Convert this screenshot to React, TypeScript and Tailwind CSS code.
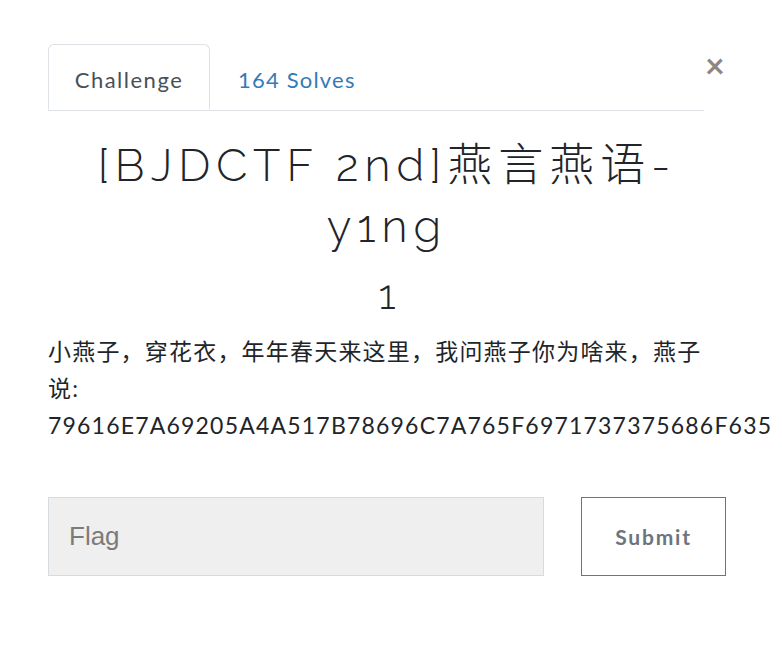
export default function App() {
  return (
    <div className="w-[782px] h-[648px] bg-white relative" style={{ fontFamily: 'Lato, "Noto Sans CJK SC", sans-serif' }}>
      <button className="absolute left-[705px] top-[48px] text-[34px] leading-none text-[#888] font-bold">×</button>
      <div className="pt-[44px] pl-[48px] pr-[56px]">
        <div className="flex w-[656px] border-b border-[#dee2e6]">
          <div className="w-[162px] h-[66px] -mb-px flex items-center justify-center border border-[#dee2e6] border-b-white rounded-t-[6px] text-[22px] tracking-[1.5px] text-[#495057] pt-[4px]">
            Challenge
          </div>
          <div className="pl-[28px] h-[66px] flex items-center text-[22px] tracking-[1.2px] text-[#337ab7] pt-[4px]">
            164 Solves
          </div>
        </div>
        <div className="pt-[24px] text-center text-[#212529] w-[678px]">
          <h2
            className="text-[45px] leading-[61px] font-light px-[20px] tracking-[6px]"
            style={{ fontFamily: 'Raleway, "Noto Sans", "Noto Sans CJK SC", sans-serif' }}
          >
            [BJDCTF 2nd]燕言燕语-y1ng
          </h2>
          <h3 className="text-[42px] leading-[76px] font-light" style={{ fontFamily: 'Raleway, "Noto Sans", sans-serif' }}>1</h3>
        </div>
        <div className="text-[23px] leading-[37px] tracking-[1.2px] text-[#212529] w-[666px]">
          <p>小燕子，穿花衣，年年春天来这里，我问燕子你为啥来，燕子说:</p>
          <p className="whitespace-nowrap">79616E7A69205A4A517B78696C7A765F6971737375686F635</p>
        </div>
        <div className="flex mt-[53px] w-[678px] gap-[37px]">
          <input
            className="flex-1 h-[79px] bg-[#efefef] border border-[#d6dbe0] px-[20px] text-[26px] text-[#555] placeholder:text-[#7b7b7b] outline-none"
            style={{ fontFamily: '"Liberation Sans", Arial, sans-serif' }}
            placeholder="Flag"
          />
          <button className="w-[145px] h-[79px] border border-[#6c757d] bg-white text-[21px] tracking-[1.8px] font-bold text-[#6c757d]">
            Submit
          </button>
        </div>
      </div>
    </div>
  );
}
